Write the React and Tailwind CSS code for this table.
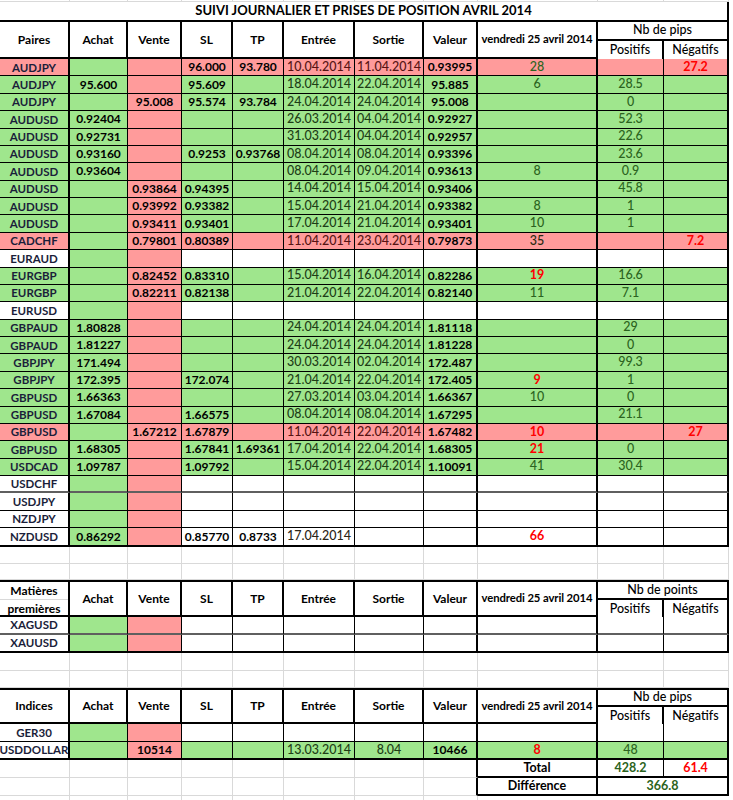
import React from 'react'

// column widths / body right borders, same for the three blocks
const W = ['w-[70px]', 'w-[58px]', 'w-[54px]', 'w-[51px]', 'w-[51px]', 'w-[71px]', 'w-[69px]', 'w-[54px]', 'w-[120px]', 'w-[66px]', 'w-[65px]']
const RB = ['border-r-2', 'border-r', 'border-r', 'border-r', 'border-r', 'border-r', 'border-r', 'border-r-2', 'border-r-2', 'border-r', 'border-r-2']

const GREEN = 'bg-[#9fe68d]'
const PINK = 'bg-[#ff9b9b]'
const DATE = { g: 'text-[#1d3d16]', p: 'text-[#561313]', w: 'text-[#2b2416]' }

// pair, fill, achat, vente, sl, tp, entree, sortie, valeur, jour, positifs, negatifs
// r: = red, k: = dark
const FOREX = [
  ['AUDJPY', 'p', '', '', '96.000', '93.780', '10.04.2014', '11.04.2014', '0.93995', '28', '', 'r:27.2'],
  ['AUDJPY', 'g', '95.600', '', '95.609', '', '18.04.2014', '22.04.2014', '95.885', '6', '28.5', ''],
  ['AUDJPY', 'g', '', '95.008', '95.574', '93.784', '24.04.2014', '24.04.2014', '95.008', '', '0', ''],
  ['AUDUSD', 'g', '0.92404', '', '', '', '26.03.2014', '04.04.2014', '0.92927', '', '52.3', ''],
  ['AUDUSD', 'g', '0.92731', '', '', '', '31.03.2014', '04.04.2014', '0.92957', '', '22.6', ''],
  ['AUDUSD', 'g', '0.93160', '', '0.9253', '0.93768', '08.04.2014', '08.04.2014', '0.93396', '', '23.6', ''],
  ['AUDUSD', 'g', '0.93604', '', '', '', '08.04.2014', '09.04.2014', '0.93613', '8', '0.9', ''],
  ['AUDUSD', 'g', '', '0.93864', '0.94395', '', '14.04.2014', '15.04.2014', '0.93406', '', '45.8', ''],
  ['AUDUSD', 'g', '', '0.93992', '0.93382', '', '15.04.2014', '21.04.2014', '0.93382', '8', '1', ''],
  ['AUDUSD', 'g', '', '0.93411', '0.93401', '', '17.04.2014', '21.04.2014', '0.93401', '10', '1', ''],
  ['CADCHF', 'p', '', '0.79801', '0.80389', '', '11.04.2014', '23.04.2014', '0.79873', 'k:35', '', 'r:7.2'],
  ['EURAUD', 'w', '', '', '', '', '', '', '', '', '', ''],
  ['EURGBP', 'g', '', '0.82452', '0.83310', '', '15.04.2014', '16.04.2014', '0.82286', 'r:19', '16.6', ''],
  ['EURGBP', 'g', '', '0.82211', '0.82138', '', '21.04.2014', '22.04.2014', '0.82140', '11', '7.1', ''],
  ['EURUSD', 'w', '', '', '', '', '', '', '', '', '', ''],
  ['GBPAUD', 'g', '1.80828', '', '', '', '24.04.2014', '24.04.2014', '1.81118', '', '29', ''],
  ['GBPAUD', 'g', '1.81227', '', '', '', '24.04.2014', '24.04.2014', '1.81228', '', '0', ''],
  ['GBPJPY', 'g', '171.494', '', '', '', '30.03.2014', '02.04.2014', '172.487', '', '99.3', ''],
  ['GBPJPY', 'g', '172.395', '', '172.074', '', '21.04.2014', '22.04.2014', '172.405', 'r:9', '1', ''],
  ['GBPUSD', 'g', '1.66363', '', '', '', '27.03.2014', '03.04.2014', '1.66367', '10', '0', ''],
  ['GBPUSD', 'g', '1.67084', '', '1.66575', '', '08.04.2014', '08.04.2014', '1.67295', '', '21.1', ''],
  ['GBPUSD', 'p', '', '1.67212', '1.67879', '', '11.04.2014', '22.04.2014', '1.67482', 'r:10', '', 'r:27'],
  ['GBPUSD', 'g', '1.68305', '', '1.67841', '1.69361', '17.04.2014', '22.04.2014', '1.68305', 'r:21', '0', ''],
  ['USDCAD', 'g', '1.09787', '', '1.09792', '', '15.04.2014', '22.04.2014', '1.10091', '41', '30.4', ''],
  ['USDCHF', 'w', '', '', '', '', '', '', '', '', '', ''],
  ['USDJPY', 'w', '', '', '', '', '', '', '', '', '', ''],
  ['NZDJPY', 'w', '', '', '', '', '', '', '', '', '', ''],
  ['NZDUSD', 'w', '0.86292', '', '0.85770', '0.8733', '17.04.2014', '', '', 'r:66', '', ''],
]

const COLS = ['Achat', 'Vente', 'SL', 'TP', 'Entrée', 'Sortie', 'Valeur']

function num(v) {
  if (!v) return null
  if (v.startsWith('r:')) return <span className="font-bold text-[#ff0000]">{v.slice(2)}</span>
  if (v.startsWith('k:')) return <span className="font-medium text-[#2a2a12]">{v.slice(2)}</span>
  return <span className="font-medium text-[#2b6320]">{v}</span>
}

function DataRow({ r, b = 'border-b', h = 'h-[17.38px]', pairWhite = false }) {
  const [pair, f, ...rest] = r
  const vals = [pair, ...rest]
  const rowFill = f === 'g' ? GREEN : f === 'p' ? PINK : 'bg-white'
  const fillOf = (i) => (i === 1 ? GREEN : i === 2 ? PINK : i === 0 && pairWhite ? 'bg-white' : rowFill)

  return (
    <div className={`flex ${h}`}>
      {vals.map((v, i) => {
        let content = null
        if (i === 0) content = <span className="text-[11.5px] font-bold text-[#1b1e3a]">{v}</span>
        else if (i === 5 || i === 6) content = <span className={`text-[12.5px] font-medium ${DATE[f]}`}>{v}</span>
        else if (i >= 8) content = num(v)
        else content = <span className="text-[12px] font-bold text-black">{v}</span>
        return (
          <div
            key={i}
            className={`flex shrink-0 items-center justify-center overflow-hidden whitespace-nowrap border-black text-[12.5px] ${b} ${W[i]} ${RB[i]} ${fillOf(i)}`}
          >
            {content}
          </div>
        )
      })}
    </div>
  )
}

function EmptyRow({ h = 'h-[17.5px]' }) {
  return (
    <div className={`flex ${h}`}>
      {W.map((w, i) => (
        <div key={i} className={`${w} shrink-0 border-r border-b border-[#d9d9d9]`} />
      ))}
    </div>
  )
}

function Header({ first, nb, top = '', h, subH }) {
  return (
    <div className={`flex ${h}`}>
      <div className={`flex ${W[0]} shrink-0 flex-col border-r-2 border-b-2 border-black ${top} text-[12px] font-bold`}>
        {first}
      </div>
      {COLS.map((c, k) => (
        <div
          key={c}
          className={`flex ${W[k + 1]} shrink-0 items-center justify-center border-r-2 border-b-2 border-black ${top} text-[12px] font-bold`}
        >
          {c}
        </div>
      ))}
      <div className={`flex ${W[8]} shrink-0 items-center justify-center whitespace-nowrap border-r-2 border-b-2 border-black ${top} text-[11.3px] font-bold tracking-[-0.1px]`}>
        vendredi 25 avril 2014
      </div>
      <div className={`flex w-[131px] shrink-0 flex-col border-r-2 border-black ${top} text-[12.5px] font-medium`}>
        <div className={`flex ${subH} items-center justify-center border-b-2 border-black`}>{nb}</div>
        <div className="flex flex-1">
          <div className="flex w-[66px] items-center justify-center border-r-2 border-b-2 border-black">Positifs</div>
          <div className="flex flex-1 items-center justify-center border-b-2 border-black">Négatifs</div>
        </div>
      </div>
    </div>
  )
}

function Plain({ label }) {
  return <div className="flex flex-1 items-center justify-center">{label}</div>
}

export default function App() {
  return (
    <div className="h-[800px] w-[733px] overflow-hidden bg-white font-['Lato',sans-serif] text-black">
      <EmptyRow h="h-[2px]" />
      <div className="flex h-[20px]">
        <div className="flex w-[729px] items-center justify-center whitespace-nowrap border-r-2 border-b-2 border-black text-[13px] font-bold">
          SUIVI JOURNALIER ET PRISES DE POSITION AVRIL 2014
        </div>
      </div>

      {/* Forex */}
      <Header first={<Plain label="Paires" />} nb="Nb de pips" h="h-[37px]" subH="h-[19px]" />
      {FOREX.map((r, i) => (
        <DataRow
          key={i}
          r={r}
          b={i === FOREX.length - 1 ? 'border-b-2' : r[0] === 'USDCHF' ? 'border-b-2 border-b-[#5f5f5f]' : 'border-b'}
          h={i === FOREX.length - 1 ? 'h-[18.9px]' : 'h-[17.38px]'}
        />
      ))}

      <EmptyRow h="h-[16.5px]" />
      <EmptyRow h="h-[16.5px]" />

      {/* Matières premières */}
      <Header
        first={
          <>
            <div className="flex h-[18px] items-center justify-center border-b border-[#d9d9d9]">Matières</div>
            <div className="flex flex-1 items-center justify-center">premières</div>
          </>
        }
        nb="Nb de points"
        top="border-t-2"
        h="h-[37px]"
        subH="h-[18px]"
      />
      <DataRow r={['XAGUSD', 'w', '', '', '', '', '', '', '', '', '', '']} h="h-[18px]" b="border-b-2 border-b-[#5f5f5f]" />
      <DataRow r={['XAUUSD', 'w', '', '', '', '', '', '', '', '', '', '']} h="h-[18px]" b="border-b-2" />

      <EmptyRow h="h-[17.5px]" />
      <EmptyRow h="h-[17.5px]" />

      {/* Indices */}
      <Header first={<Plain label="Indices" />} nb="Nb de pips" top="border-t-2" h="h-[36px]" subH="h-[17px]" />
      <DataRow r={['GER30', 'w', '', '', '', '', '', '', '', '', '', '']} h="h-[18px]" />
      <DataRow
        r={['USDDOLLAR', 'g', '', '10514', '', '', '13.03.2014', '8.04', '10466', 'r:8', '48', '']}
        h="h-[18px]"
        b="border-b-2"
        pairWhite
      />

      {/* totals */}
      <div className="flex h-[18px]">
        {W.slice(0, 7).map((w, i) => (
          <div key={i} className={`${w} shrink-0 border-r border-b border-[#d9d9d9]`} />
        ))}
        <div className={`${W[7]} shrink-0 border-r-2 border-b border-[#d9d9d9] border-r-black`} />
        <div className="flex w-[120px] shrink-0 items-center justify-center border-r-2 border-b-2 border-black text-[12.5px] font-bold">
          Total
        </div>
        <div className="flex w-[66px] shrink-0 items-center justify-center border-r border-b-2 border-black text-[12.5px] font-bold text-[#2b6320]">
          428.2
        </div>
        <div className="flex w-[65px] shrink-0 items-center justify-center border-r-2 border-b-2 border-black text-[12.5px] font-bold text-[#ff0000]">
          61.4
        </div>
      </div>
      <div className="flex h-[18px]">
        {W.slice(0, 7).map((w, i) => (
          <div key={i} className={`${w} shrink-0 border-r border-b border-[#d9d9d9]`} />
        ))}
        <div className={`${W[7]} shrink-0 border-r-2 border-b border-[#d9d9d9] border-r-black`} />
        <div className="flex w-[120px] shrink-0 items-center justify-center border-r-2 border-b-2 border-black text-[12.5px] font-bold">
          Différence
        </div>
        <div className="flex w-[131px] shrink-0 items-center justify-center border-r-2 border-b-2 border-black text-[12.5px] font-bold text-[#2b6320]">
          366.8
        </div>
      </div>
      <div className="flex h-[6px]">
        {W.slice(0, 8).map((w, i) => (
          <div key={i} className={`${w} shrink-0 border-r border-[#d9d9d9]`} />
        ))}
      </div>
    </div>
  )
}
